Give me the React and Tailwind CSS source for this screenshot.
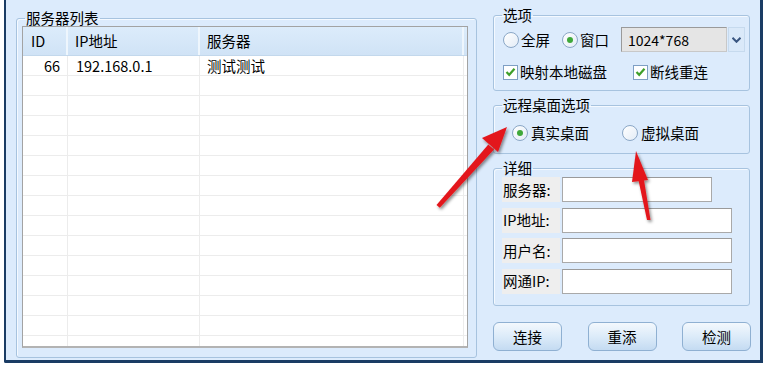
import React from 'react';

const font = "font-['Noto_Sans_CJK_SC','Noto_Sans',sans-serif]";

const Radio = ({ checked }) => (
  <span className="w-[16px] h-[16px] rounded-full border border-[#8ba7c6] bg-linear-to-br from-[#ffffff] to-[#e3ecf6] flex items-center justify-center shrink-0">
    {checked && <span className="w-[6px] h-[6px] rounded-full bg-[#3fa83a]"></span>}
  </span>
);

const Check = () => (
  <span className="w-[15px] h-[15px] border border-[#7e9fc4] bg-white flex items-center justify-center shrink-0">
    <svg width="11" height="10" viewBox="0 0 11 10">
      <path d="M1.5 5 L4.2 7.8 L9.5 1.8" fill="none" stroke="#3f9f2a" strokeWidth="2.2" />
    </svg>
  </span>
);

// padding lives on the inner div so every legend sits at the same offset
const Group = ({ title, className, inner, children }) => (
  <fieldset className={`border border-[#a7c3df] rounded-[3px] shadow-[inset_1px_1px_0_#f4f9ff] ${className}`}>
    <legend className="ml-[8px] px-[1px] leading-[16px] text-[14.5px] text-black">{title}</legend>
    <div className={inner}>{children}</div>
  </fieldset>
);

const Field = ({ label, width }) => (
  <div className="flex items-center h-[25px]">
    <div className="w-[58px] h-[25px] bg-[#eeeeee] pl-[1px] flex items-center text-[14.5px] leading-[16px]">
      {label}
    </div>
    <div className={`ml-[2px] h-[25px] ${width} bg-white border border-[#a9a9a9] border-t-[#9a9a9a]`}></div>
  </div>
);

const Btn = ({ children }) => (
  <button className="w-[69px] h-[29px] rounded-[6px] border border-[#8fb0d2] bg-linear-to-b from-[#f3f8fd] via-[#dcebf9] to-[#c4dbf2] text-[14.5px] leading-[16px] text-black">
    {children}
  </button>
);

export default function App() {
  const rows = Array.from({ length: 15 });

  return (
    <div className={`relative w-[768px] h-[374px] bg-white overflow-hidden ${font} text-black`}>
      <div className="ml-[4px] w-[759px] h-[363px] border-l-[2px] border-r-[3px] border-b-[3px] border-[#1a3c64] rounded-bl-[2px] bg-[#dcebfc] flex">
        {/* server list */}
        <Group title="服务器列表" className="ml-[10px] mt-[10px] w-[461px] h-[348px]" inner="pl-[5px]">
          <div className="w-[446px] h-[322px] border border-[#a3a3a3] border-b-2 border-b-[#b3b3b3] bg-white overflow-hidden">
            <div className="flex h-[29px] bg-linear-to-b from-[#dcecfb] to-[#d0e3f6] border-b border-[#c3d8ec] text-[14.5px] leading-[16px]">
              <div className="w-[45px] pl-[8px] flex items-center border-r-2 border-[#eef6fd]">ID</div>
              <div className="w-[132px] pl-[7px] flex items-center border-r-2 border-[#eef6fd]">IP地址</div>
              <div className="w-[264px] pl-[7px] flex items-center border-r-2 border-[#eef6fd]">服务器</div>
              <div className="flex-1"></div>
            </div>
            {rows.map((_, i) => (
              <div key={i} className="flex h-[20px] border-b border-[#ececec] text-[14.5px] leading-[16px]">
                <div className="w-[45px] pr-[7px] flex items-center justify-end border-r border-[#ececec]">
                  {i === 0 ? '66' : ''}
                </div>
                <div className="w-[132px] pl-[8px] flex items-center border-r border-[#ececec]">
                  {i === 0 ? '192.168.0.1' : ''}
                </div>
                <div className="w-[264px] pl-[7px] flex items-center border-r border-[#ececec]">
                  {i === 0 ? '测试测试' : ''}
                </div>
                <div className="flex-1"></div>
              </div>
            ))}
          </div>
        </Group>

        {/* right column */}
        <div className="ml-[16px] w-[258px] flex flex-col">
          <Group title="选项" className="mt-[7px] w-[257px] h-[84px]" inner="pl-[9px]">
            <div className="flex items-center h-[25px] mt-[4px] text-[14.5px] leading-[16px]">
              <Radio />
              <span className="ml-[2px]">全屏</span>
              <span className="ml-[12px]"><Radio checked /></span>
              <span className="ml-[2px]">窗口</span>
              <div className="ml-[12px] w-[106px] h-[25px] border border-[#9a9a9a] border-b-[#c8c8c8] border-r-[#c8c8c8] bg-[#e5e5e5] pl-[6px] flex items-center text-[14px]">
                1024*768
              </div>
              <div className="ml-[1px] w-[17px] h-[25px] bg-[#dae9f9] border border-[#c6daee] flex items-center justify-center">
                <svg width="9" height="6" viewBox="0 0 9 6">
                  <path d="M0.5 0.8 L4.5 4.8 L8.5 0.8" fill="none" stroke="#3a5680" strokeWidth="2" />
                </svg>
              </div>
            </div>
            <div className="flex items-center h-[18px] mt-[11px] text-[14.5px] leading-[16px]">
              <Check />
              <span className="ml-[2px]">映射本地磁盘</span>
              <span className="ml-[26px]"><Check /></span>
              <span className="ml-[2px]">断线重连</span>
            </div>
          </Group>

          <Group title="远程桌面选项" className="mt-[6px] w-[257px] h-[57px]" inner="pl-[18px]">
            <div className="flex items-center h-[18px] mt-[11px] text-[14.5px] leading-[16px]">
              <Radio checked />
              <span className="ml-[3px]">真实桌面</span>
              <span className="ml-[33px]"><Radio /></span>
              <span className="ml-[3px]">虚拟桌面</span>
            </div>
          </Group>

          <Group title="详细" className="mt-[6px] w-[257px] h-[146px]" inner="pl-[8px]">
            <div className="flex flex-col gap-[5.5px] mt-[1px]">
              <Field label="服务器:" width="w-[150px]" />
              <Field label="IP地址:" width="w-[170px]" />
              <Field label="用户名:" width="w-[170px]" />
              <Field label="网通IP:" width="w-[170px]" />
            </div>
          </Group>

          <div className="mt-[16px] flex justify-between w-[258px]">
            <Btn>连接</Btn>
            <Btn>重添</Btn>
            <Btn>检测</Btn>
          </div>
        </div>
      </div>

      {/* red arrows */}
      <svg className="absolute inset-0 pointer-events-none" width="768" height="374" viewBox="0 0 768 374">
        <defs>
          <filter id="sh" x="-20%" y="-20%" width="140%" height="140%">
            <feDropShadow dx="1.5" dy="2" stdDeviation="1.5" floodColor="#000" floodOpacity="0.45" />
          </filter>
        </defs>
        <g fill="#e3161b" filter="url(#sh)">
          <polygon points="436.5,205 439.8,207.8 494,149.5 488.3,144.5" />
          <polygon points="507,127 498,152 482,138" />
          <polygon points="647,220 650.5,220 643.5,177 638,178" />
          <polygon points="636,151 648,180 632,182" />
        </g>
      </svg>
    </div>
  );
}
